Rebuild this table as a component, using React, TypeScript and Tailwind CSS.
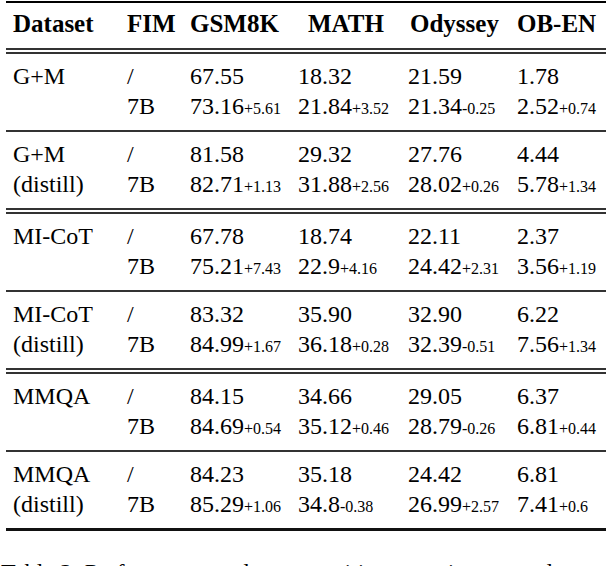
const cols = 'grid grid-cols-[114px_63px_108px_110px_109px_1fr]';

type Cell = [string, string?];

const groups: { name: [string, string]; base: string[]; ft: Cell[] }[] = [
  { name: ['G+M', ''], base: ['67.55', '18.32', '21.59', '1.78'], ft: [['73.16', '+5.61'], ['21.84', '+3.52'], ['21.34', '-0.25'], ['2.52', '+0.74']] },
  { name: ['G+M', '(distill)'], base: ['81.58', '29.32', '27.76', '4.44'], ft: [['82.71', '+1.13'], ['31.88', '+2.56'], ['28.02', '+0.26'], ['5.78', '+1.34']] },
  { name: ['MI-CoT', ''], base: ['67.78', '18.74', '22.11', '2.37'], ft: [['75.21', '+7.43'], ['22.9', '+4.16'], ['24.42', '+2.31'], ['3.56', '+1.19']] },
  { name: ['MI-CoT', '(distill)'], base: ['83.32', '35.90', '32.90', '6.22'], ft: [['84.99', '+1.67'], ['36.18', '+0.28'], ['32.39', '-0.51'], ['7.56', '+1.34']] },
  { name: ['MMQA', ''], base: ['84.15', '34.66', '29.05', '6.37'], ft: [['84.69', '+0.54'], ['35.12', '+0.46'], ['28.79', '-0.26'], ['6.81', '+0.44']] },
  { name: ['MMQA', '(distill)'], base: ['84.23', '35.18', '24.42', '6.81'], ft: [['85.29', '+1.06'], ['34.8', '-0.38'], ['26.99', '+2.57'], ['7.41', '+0.6']] },
];

function DoubleRule() {
  return (
    <div className="flex flex-col gap-[2px]">
      <div className="h-[2px] bg-[#333]" />
      <div className="h-[2px] bg-[#333]" />
    </div>
  );
}

function Group({ g }: { g: (typeof groups)[number] }) {
  return (
    <div className="px-[7px] pt-[7px] pb-[9px]">
      <div className={`${cols} h-[30px]`}>
        <span>{g.name[0]}</span>
        <span>/</span>
        {g.base.map((v, i) => (
          <span key={i}>{v}</span>
        ))}
      </div>
      <div className={`${cols} h-[30px]`}>
        <span>{g.name[1]}</span>
        <span>7B</span>
        {g.ft.map(([v, d], i) => (
          <span key={i} className="whitespace-nowrap">
            {v}
            <span className="text-[16px] leading-none">{d}</span>
          </span>
        ))}
      </div>
    </div>
  );
}

export default function App() {
  return (
    <div className="bg-white w-[608px] h-[566px] overflow-hidden text-black font-serif">
      <div className="text-[24px] leading-[30px] font-[family-name:Liberation_Serif,Times_New_Roman,serif]">
        <div className="ml-[6px] w-[600px] pt-px">
          <div className="h-[2px] bg-black" />
          <div className={`${cols} h-[45px] px-[7px] pt-[6px] pb-[9px] font-bold text-[25px]`}>
            <span>Dataset</span>
            <span>FIM</span>
            <span>GSM8K</span>
            <span className="pl-[10px]">MATH</span>
            <span className="pl-[2px]">Odyssey</span>
            <span>OB-EN</span>
          </div>
          <DoubleRule />
          {groups.map((g, i) => (
            <div key={i}>
              <Group g={g} />
              {i === 5 ? (
                <div className="h-[3px] bg-[#111]" />
              ) : i % 2 === 0 ? (
                <div className="h-[2px] bg-[#333]" />
              ) : (
                <DoubleRule />
              )}
            </div>
          ))}
        </div>
        <p className="mt-[26px] pl-px whitespace-nowrap">Table 2: Performance under competition experiments and</p>
      </div>
    </div>
  );
}
